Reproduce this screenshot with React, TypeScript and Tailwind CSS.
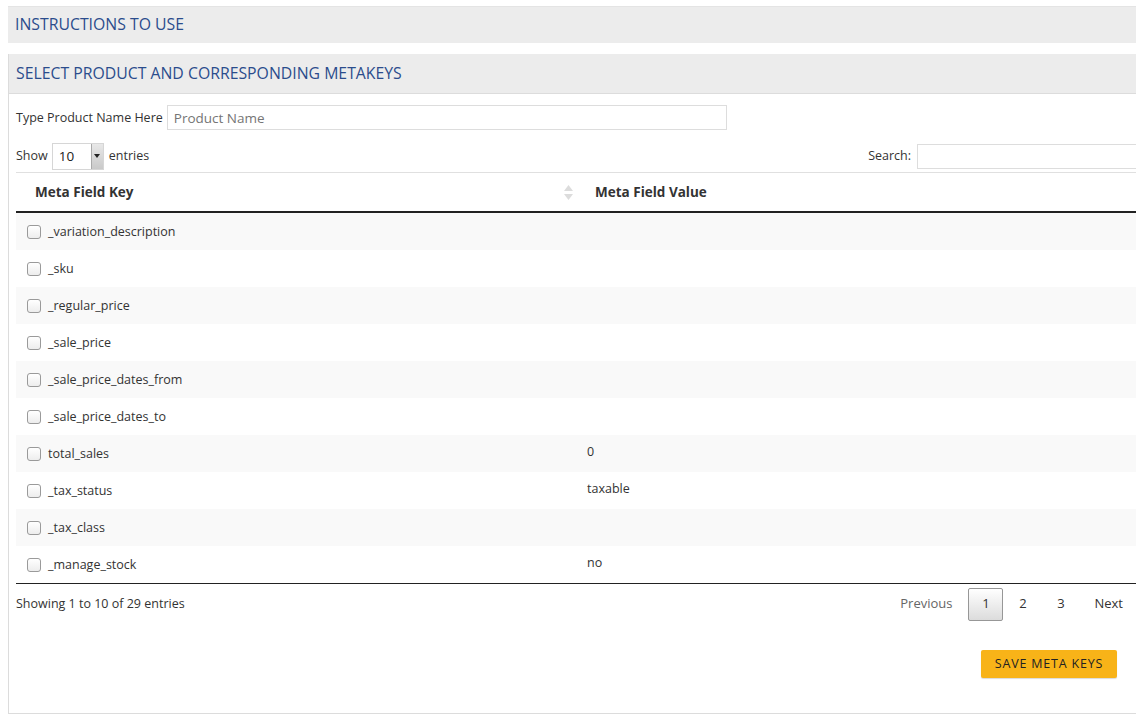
import React from "react";

const rows: [string, string][] = [
  ["_variation_description", ""],
  ["_sku", ""],
  ["_regular_price", ""],
  ["_sale_price", ""],
  ["_sale_price_dates_from", ""],
  ["_sale_price_dates_to", ""],
  ["total_sales", "0"],
  ["_tax_status", "taxable"],
  ["_tax_class", ""],
  ["_manage_stock", "no"],
];

export default function App() {
  return (
    <div className="w-[1136px] h-[717px] overflow-hidden bg-white text-[#333] text-[13px]" style={{ fontFamily: '"Open Sans", "Noto Sans", sans-serif' }}>
      <div className="w-[1160px] pl-[8px] pt-[6px]">
        <div className="h-[37px] bg-[#ececec] border-t border-[#e4e4e4] flex items-center pl-[7px] pb-[1px] text-[15.8px] text-[#2b4c8c]">
          INSTRUCTIONS TO USE
        </div>
        <div className="mt-[11px] border border-[#dcdcdc] border-t-0 h-[660px]">
          <div className="h-[40px] bg-[#ececec] border-b border-[#dcdcdc] flex items-center pl-[7px] text-[15.8px] text-[#2b4c8c]">
            SELECT PRODUCT AND CORRESPONDING METAKEYS
          </div>
          <div className="pl-[7px]">
            <div className="flex items-center mt-[11px] h-[25px]">
              <span className="text-[12.5px] pt-[2px]">Type Product Name Here</span>
              <input
                className="ml-[4px] w-[560px] h-[25px] border border-[#dddddd] px-[6px] text-[13.5px] outline-none placeholder:text-[#757575]"
                placeholder="Product Name"
              />
            </div>
            <div className="flex items-center justify-between mt-[12px] h-[28px]">
              <div className="flex items-center text-[12.5px]">
                <span>Show</span>
                <div className="ml-[4px] w-[52px] h-[27px] border border-[#d6d6d6] flex items-center bg-white">
                  <span className="flex-1 pl-[6px] text-[13.5px] text-[#222]">10</span>
                  <span className="w-[12px] h-[25px] bg-gradient-to-b from-[#e8e8e8] to-[#c9c9c9] border-l border-[#aaa] flex items-center justify-center">
                    <svg width="6" height="4" viewBox="0 0 6 4"><path d="M0 0h6L3 4z" fill="#222" /></svg>
                  </span>
                </div>
                <span className="ml-[5px]">entries</span>
              </div>
              <div className="flex items-center text-[12.5px] pr-[22px]">
                <span>Search:</span>
                <input className="ml-[6px] w-[220px] h-[25px] border border-[#dddddd] outline-none" />
              </div>
            </div>
            <div className="mt-[2px] border-t border-[#e0e0e0]">
              <div className="flex h-[40px] items-center border-b-2 border-[#222] font-bold text-[13.5px] text-[#333]">
                <div className="w-[561px] pl-[19px] flex items-center justify-between pr-[4px]">
                  <span>Meta Field Key</span>
                  <svg width="9" height="15" viewBox="0 0 9 15">
                    <path d="M4.5 0L9 6H0z" fill="#dcdcdc" />
                    <path d="M4.5 15L9 9H0z" fill="#dcdcdc" />
                  </svg>
                </div>
                <div className="pl-[18px]">Meta Field Value</div>
              </div>
              {rows.map(([k, v], i) => (
                <div key={k} className={`flex h-[37px] items-center text-[12.5px] ${i % 2 === 0 ? "bg-[#f9f9f9]" : "bg-white"}`}>
                  <div className="w-[561px] pl-[11px] flex items-center">
                    <span className="w-[14px] h-[14px] rounded-[3px] border border-[#9a9a9a] bg-gradient-to-b from-white to-[#ededed]" />
                    <span className="ml-[7px] pt-[2px]">{k}</span>
                  </div>
                  <div className="pl-[10px] -mt-[2px]">{v}</div>
                </div>
              ))}
              <div className="border-t border-[#222]" />
            </div>
            <div className="flex items-center justify-between h-[40px] pr-[36px]">
              <span className="text-[12.5px]">Showing 1 to 10 of 29 entries</span>
              <div className="flex items-center text-[13px]">
                <span className="text-[#666] mr-[16px]">Previous</span>
                <span className="w-[35px] h-[33px] flex items-center justify-center border border-[#979797] rounded-[2px] bg-gradient-to-b from-white to-[#dcdcdc] text-[#333]">1</span>
                <span className="w-[39px] text-center">2</span>
                <span className="w-[37px] text-center">3</span>
                <span className="ml-[15px] text-[#333]">Next</span>
              </div>
            </div>
            <div className="flex justify-end pr-[42px] mt-[26px]">
              <button className="w-[136px] h-[28px] bg-[#f8b318] rounded-[2px] text-[12.5px] tracking-[0.8px] text-[#222] shadow-[0_1px_1px_rgba(0,0,0,0.15)]">
                SAVE META KEYS
              </button>
            </div>
          </div>
        </div>
      </div>
    </div>
  );
}
